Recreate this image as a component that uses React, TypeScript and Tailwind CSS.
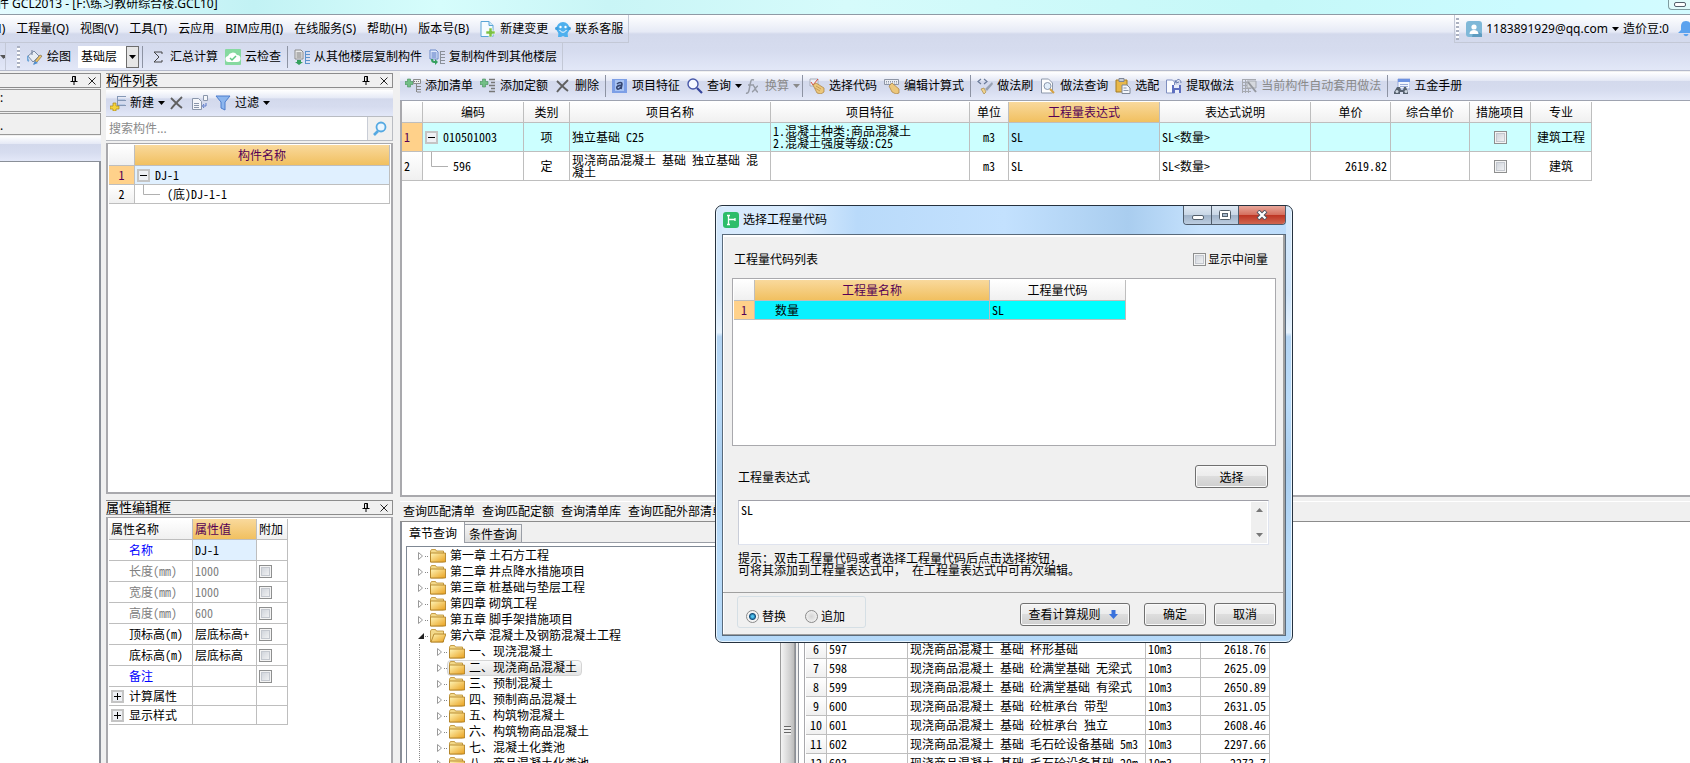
import React, { useState } from 'react'
import clsx from 'clsx'

const UI = "font-['Noto_Sans','Noto_Sans_CJK_SC',sans-serif]"
const GRID = "font-['Noto_Sans_Mono_CJK_SC','Noto_Sans_CJK_SC',monospace]"
const BAR = 'bg-[linear-gradient(#ffffff_0%,#e6eaf6_30%,#d3d9ec_34%,#d6dcef_65%,#e3e8f8_100%)]'
const HEAD = 'bg-[linear-gradient(#ffffff,#f0f0f0)]'
const HOT = 'bg-[linear-gradient(#f9d99c,#f1c060)] text-[#550055]'
const CELL = 'overflow-hidden border-r border-b border-[#bebebe] whitespace-nowrap p-0 font-normal'

const icons: Record<string, React.ReactNode> = {
  paint: (
    <>
      <path d="M1 7l6-5 5 5-6 6z" fill="#e7edf5" stroke="#7b8ba5" />
      <path d="M5 1v5" stroke="#6d7d96" />
      <path d="M1 7c-1 2-1 4 1 5" stroke="#6fa6d8" fill="none" strokeWidth="2" />
      <path d="M15 7l-5 6-3 2 1-3 5-6z" fill="#f2c560" stroke="#8a7b5c" strokeWidth=".8" />
      <path d="M8 12l3 2-5 2z" fill="#4d8fd6" />
    </>
  ),
  cloud: (
    <>
      <rect width="16" height="16" rx="1" fill="#86d9a0" />
      <path d="M4 13a3 3 0 0 1-1-6 5 5 0 0 1 9-1 3.500 3.500 0 0 1 0 7z" fill="#fff" />
      <path d="M5 9l2 2 4-4" stroke="#5fc882" strokeWidth="1.500" fill="none" />
    </>
  ),
  copyFrom: (
    <>
      <path d="M1 1h6l2 2v7H1z" fill="#ececec" stroke="#8b8b8b" />
      <path d="M2.500 4h5M2.500 6h5M2.500 8h5" stroke="#777" />
      <path d="M3 11h4v2h2l-4 3-4-3h2z" fill="#35a05e" />
      <path d="M11.500 2v13M12 2.500h4M12 5.500h4M12 8.500h4M12 11.500h4M12 14.500h4" stroke="#5d93cc" />
    </>
  ),
  copyTo: (
    <>
      <path d="M1 1h6l2 2v7H1z" fill="#dfe8fa" stroke="#6c8bcb" />
      <path d="M2.500 4h5M2.500 6h5M2.500 8h5" stroke="#4a6fc0" />
      <path d="M2 10h2c0 2 1 2 2 2v-2l3 3-3 3v-2c-3 0-4-1-4-4z" fill="#35a05e" />
      <path d="M11.500 2v13M12 2.500h4M12 5.500h4M12 8.500h4M12 11.500h4M12 14.500h4" stroke="#8a9099" />
    </>
  ),
  change: (
    <>
      <path d="M1 .5h8l4 4v11H1z" fill="#f5fbff" stroke="#5aa5d6" />
      <path d="M9 .5v4h4" fill="#cfe8f8" stroke="#5aa5d6" />
      <path d="M9 7h3v3h3v3h-3v3H9v-3H6v-3h3z" fill="#7cc142" stroke="#f4fbef" strokeWidth=".6" />
    </>
  ),
  service: (
    <>
      <circle cx="8" cy="7.500" r="6.500" fill="#4fb0ee" />
      <circle cx="1.800" cy="7.500" r="1.800" fill="#3f9fe0" />
      <circle cx="14.200" cy="7.500" r="1.800" fill="#3f9fe0" />
      <path d="M3.500 11L3 16h3l2-1 2 1h3l-.5-5z" fill="#4fb0ee" />
      <circle cx="5.500" cy="6" r="1.200" fill="#fff" />
      <circle cx="10.500" cy="6" r="1.200" fill="#fff" />
      <path d="M4.500 9c2 3 5 3 7 0" stroke="#fff" fill="none" />
    </>
  ),
  user: (
    <>
      <rect width="16" height="16" rx="3" fill="#7fb8d8" />
      <path d="M8 8l8 5v3H6z" fill="#5f9cc0" />
      <circle cx="8" cy="6" r="2.600" fill="#fff" />
      <path d="M3.500 13c0-3 2-4 4.500-4s4.500 1 4.500 4z" fill="#fff" />
    </>
  ),
  bell: <path d="M8 0c4 0 5 3 5 6v3l3 3H0l3-3V6c0-3 1-6 5-6zM5.500 13h5c-1 3-4 3-5 0z" fill="#5ba2ee" />,
  create: (
    <>
      <path d="M7.500 1v11M8 1.500h8M8 5.500h8M8 10.500h8" stroke="#8497b5" fill="none" />
      <path d="M8 4h7v1H8zM8 9h7v1H8z" fill="#b8c9e4" />
      <path d="M3 8h3v3h3v3H6v2H3v-2H0v-3h3z" fill="#f5d33d" stroke="#a98719" strokeWidth=".7" />
    </>
  ),
  cross: <path d="M2 3c3 3 7 7 11 10M13 2C9 6 5 10 2 14" stroke="#606060" strokeWidth="1.800" fill="none" />,
  dup: (
    <>
      <path d="M.5 3.500h6l3 3v8h-9z" fill="#f4f6fa" stroke="#8a96ab" />
      <path d="M2 8.500h5M2 10.500h5M2 12.500h5" stroke="#8a96ab" />
      <path d="M11.500.5h4v5h-4z" fill="#f4f6fa" stroke="#8a96ab" />
      <path d="M14 8v3h-3M12 9l-1.500 2 1.500 2" stroke="#5a78c8" fill="none" />
    </>
  ),
  funnel: <path d="M1 1h14l-5 6v8l-4-2V7z" fill="#8db6ee" stroke="#4c7dcc" />,
  addList: (
    <>
      <path d="M2.500 1h3v2.500H8v3H5.500V9h-3V6.500H0v-3h2.500z" fill="#72bf86" stroke="#468f5b" strokeWidth=".6" />
      <path d="M8.500 1.500h7v4h-7z" fill="#eee" stroke="#8c8c8c" />
      <path d="M9 3.500h6" stroke="#777" strokeDasharray="1 1" />
      <path d="M11.500 6v8M12 8.500h4M12 11.500h4M12 14h4" stroke="#888" />
    </>
  ),
  addQuota: (
    <>
      <path d="M2.500 1h3v2.500H8v3H5.500V9h-3V6.500H0v-3h2.500z" fill="#72bf86" stroke="#468f5b" strokeWidth=".6" />
      <path d="M9 1.500h6M11 4.500h4M9 7.500h6M11 10.500h4M9 13.500h6" stroke="#777" strokeWidth="1.300" />
    </>
  ),
  feature: (
    <>
      <rect y="1" width="15" height="14" fill="#7d9fe6" />
      <rect x="3" y="2" width="9" height="11" fill="#a9c4f3" />
      <path d="M5 6c2-2 5-2 5 0l-1 5M9.500 7.500C6 7 4 9 5 10.500s3 0 4-1.500" stroke="#34446e" strokeWidth="1.600" fill="none" />
    </>
  ),
  search: (
    <>
      <circle cx="6" cy="6" r="5" fill="#f5f8ff" stroke="#4757a8" strokeWidth="1.400" />
      <path d="M10 10l5 5" stroke="#35459c" strokeWidth="2.200" />
    </>
  ),
  find: (
    <>
      <circle cx="9" cy="6" r="4.500" fill="#eaf6ff" stroke="#55a9e2" strokeWidth="1.800" />
      <path d="M6 10l-4 4" stroke="#55a9e2" strokeWidth="2.600" />
    </>
  ),
  fx: (
    <path d="M1 15c3 1 3-3 4-8s1-6 4-5M3 7h6M8 8c2-1 2 6 5 6M13 8c-2 0-3 5-6 6" stroke="#979ca6" strokeWidth="1.500" fill="none" />
  ),
  pick: (
    <>
      <path d="M1 1h8v7H1z" fill="#eceff5" stroke="#a9afbb" />
      <path d="M2 4l2 3 5-6" stroke="#d9483a" fill="none" />
      <path d="M4 7l3-2 8 5v4l-3 2-4-1z" fill="#ecc77c" stroke="#a9803d" strokeWidth=".7" />
      <path d="M7 8l5 3M6 10l5 3" stroke="#b88d49" strokeWidth=".7" />
    </>
  ),
  edit: (
    <>
      <path d="M.5 1.500h14v5H.5z" fill="#eceff5" stroke="#8d95a5" />
      <path d="M2 3.500h11M2 5h11" stroke="#8d95a5" strokeDasharray="1 1" />
      <path d="M5 8l3-3 7 6v4l-3 1-4-2z" fill="#ecc77c" stroke="#a9803d" strokeWidth=".7" />
    </>
  ),
  brush: (
    <>
      <path d="M4 1L1 3.500 4 6M7 1l3 2.500L7 6" stroke="#6a7a98" fill="none" strokeWidth="1.200" />
      <path d="M4 11l3-1 2 4-2 2z" fill="#f0d38f" stroke="#a88a47" strokeWidth=".7" />
      <path d="M8 11l7-7 1 2-6 7z" fill="#98a2b4" />
    </>
  ),
  lookup: (
    <>
      <path d="M1.500 1h7l4 4v10h-11z" fill="#fdfdfd" stroke="#8d98ab" />
      <circle cx="7.500" cy="8" r="3.500" fill="#e1edf9" stroke="#8b97ab" />
      <path d="M10 11l4 4" stroke="#d5a142" strokeWidth="2" />
    </>
  ),
  paste: (
    <>
      <path d="M1 2h11v12H1z" fill="#e8b84a" stroke="#a37d25" />
      <path d="M4 .5h5v3H4z" fill="#c9ced8" stroke="#7e8797" />
      <path d="M7 7h5l3 3v5.500H7z" fill="#f3f6fb" stroke="#7e8797" />
      <path d="M8.500 10h3M8.500 12.500h5" stroke="#8c97aa" />
    </>
  ),
  extract: (
    <>
      <path d="M.5 2h6l2 2v11h-8z" fill="#fbfcff" stroke="#7f8fc0" />
      <path d="M6 7h9v8H6z" fill="#5e6fc0" />
      <path d="M8 7h5v3H8zM9 12h4v3H9z" fill="#e9edfa" />
      <path d="M10 4c1-4 5-3 5 1M9 2l1 3 3-1" stroke="#6a7cae" fill="none" />
    </>
  ),
  auto: (
    <>
      <path d="M1 1.500h14M1 4.500h5M1 7.500h5M1 10.500h9M1 13.500h9M1.500 1v14M4.500 1v14M7.500 4v11" stroke="#a6a9b0" />
      <path d="M6 3h9v7H6z" fill="#d5d8de" stroke="#a6a9b0" />
      <path d="M7 4l8 10" stroke="#94979e" strokeWidth="2" />
    </>
  ),
  manual: (
    <>
      <path d="M4 1h12v10H4z" fill="#f2f6ff" stroke="#9aabd8" />
      <path d="M4 1h12v3H4z" fill="#6d92e2" />
      <path d="M6 6.500h8M6 8.500h8" stroke="#9aabd8" />
      <path d="M3 9h3l1 3h2l1-3h2l2 5v2H9v-2H6v2H0v-2z" fill="#56616f" />
      <circle cx="3" cy="13.500" r="1.500" fill="#cfd8e2" />
      <circle cx="12" cy="13.500" r="1.500" fill="#cfd8e2" />
    </>
  ),
  sigma: <path d="M12 5V3H4l5 5-5 5h8v-2" stroke="#444" fill="none" />,
}

function Icon({ name }: { name: string }) {
  return (
    <svg viewBox="0 0 16 16" className="h-4 w-4 shrink-0" fill="none" aria-hidden="true">
      {icons[name]}
    </svg>
  )
}

const Arrow = () => (
  <svg viewBox="0 0 7 4" className="h-1 w-[7px] shrink-0" aria-hidden="true">
    <path d="M0 0h7L3.500 4z" fill="currentColor" />
  </svg>
)

interface toolInterface {
  icon?: string
  label: string
  arrow?: boolean
  disabled?: boolean
}

function Tool({ icon, label, arrow, disabled }: toolInterface) {
  return (
    <button
      type="button"
      disabled={disabled}
      className={clsx('flex shrink-0 items-center gap-1 whitespace-nowrap', disabled && 'text-[#8a8a8a]', arrow && '-mr-1')}
    >
      {icon && <Icon name={icon} />}
      {label}
      {arrow && <Arrow />}
    </button>
  )
}

const Sep = () => <span className="-mx-px h-[22px] w-px shrink-0 bg-[#8d93a3]" />

const Grip = () => <span className="h-[22px] w-[3px] shrink-0 bg-[repeating-linear-gradient(#aab0c0_0_2px,#ffffff_2px_4px)]" />

function PanelTitle({ title }: { title?: string }) {
  return (
    <div className="flex h-[15px] shrink-0 items-center border border-l-0 border-[#8c8c8c] bg-[#f0f0f0] pr-1 text-[13px] leading-[13px]">
      <h2 className="flex-1">{title}</h2>
      <button type="button" aria-label="固定" className="mr-[10px]">
        <svg viewBox="0 0 8 9" className="h-[9px] w-2" fill="none">
          <path d="M2.500 5V.5h3V5M5 0v5M.5 5.500h7M4 6v3" stroke="#000" />
        </svg>
      </button>
      <button type="button" aria-label="关闭">
        <svg viewBox="0 0 8 8" className="h-2 w-2" fill="none">
          <path d="M.5.5l7 7M7.500.5l-7 7" stroke="#222" />
        </svg>
      </button>
    </div>
  )
}

function Check({ label }: { label: string }) {
  return (
    <input
      type="checkbox"
      aria-label={label}
      className="block h-[13px] w-[13px] shrink-0 appearance-none border border-[#8e8f8f] bg-[linear-gradient(135deg,#c9ced6,#f8f8f8)] shadow-[inset_0_0_0_1px_#f4f4f4,inset_0_0_0_2px_#c4c8cf] checked:bg-[#3c7fb1]"
    />
  )
}

function Expander({ open }: { open?: boolean }) {
  return (
    <button type="button" aria-label={open ? '折叠' : '展开'} className="h-[13px] w-[13px] shrink-0 border-2 border-[#c4c4c4] bg-[#eef0f4]">
      <svg viewBox="0 0 9 9" className="h-[9px] w-[9px]" fill="none">
        <path d={open ? 'M1 4.500h7' : 'M1 4.500h7M4.500 1v7'} stroke="#000" />
      </svg>
    </button>
  )
}

const Branch = () => (
  <svg viewBox="0 0 17 28" className="h-7 w-[17px] shrink-0 self-start" fill="none" aria-hidden="true">
    <path d="M.5 0v14.500H17" stroke="#b0b0b0" />
  </svg>
)

const menus = ['工程量(Q)', '视图(V)', '工具(T)', '云应用', 'BIM应用(I)', '在线服务(S)', '帮助(H)', '版本号(B)']

function TopBars() {
  return (
    <header className="shrink-0">
      <div className="flex h-[15px] items-end justify-between border-b border-[#8f9aa5] bg-[linear-gradient(90deg,#e4fbff_0%,#c2f2f4_15%,#d6fdfc_26%,#c9f5f6_36%,#d6fbfb_50%,#c5f8f8_75%,#cbfbff_90%,#d3fbff_100%)]">
        <h1 className="-ml-[3px] whitespace-nowrap text-xs leading-5">件 GCL2013 - [F:\练习教研综合楼.GCL10]</h1>
        <button type="button" aria-label="最小化" className="mb-1 flex h-[10px] w-[22px] items-center justify-center rounded-bl border border-t-0 border-r-0 border-[#7f9b9f] bg-[#dffbfb]">
          <span className="h-[5px] w-3 rounded-xs border border-[#54606c] bg-white" />
        </button>
      </div>
      <div className={BAR}>
        <div className="flex h-7 items-center justify-between">
          <nav className="flex h-full items-center gap-[11px] border-r border-b border-[#c3c8d6] pr-[5px]">
            <a href="#" className="-ml-[11px]">(N)</a>
            {menus.map((m) => (
              <a key={m} href="#" className="whitespace-nowrap">{m}</a>
            ))}
            <span className="flex gap-[7px]">
              <Tool icon="change" label="新建变更" />
              <Tool icon="service" label="联系客服" />
            </span>
          </nav>
          <div className="flex h-full items-center gap-[7px] overflow-hidden border-b border-l border-[#c3c8d6] pl-px">
            <Grip />
            <Tool icon="user" label="1183891929@qq.com" arrow />
            <span className="pl-px">造价豆:0</span>
            <span className="-mr-1 pl-[2px]"><Icon name="bell" /></span>
          </div>
        </div>
        <div className="flex h-7 items-center border-b border-[#b5bacb]">
          <div className="flex h-full items-center gap-[7px] border-r border-[#c3c8d6] pr-[5px]">
            <span className="mr-1 flex h-full w-[6px] items-center overflow-hidden border-r border-[#c3c8d6] text-[#555]">
              <Arrow />
            </span>
            <Grip />
            <Tool icon="paint" label="绘图" />
            <span className="relative flex h-[22px] w-[61px] items-center bg-white">
              <select aria-label="楼层" className="h-full w-full appearance-none pl-[3px]">
                <option>基础层</option>
              </select>
              <span className="pointer-events-none absolute inset-y-0 right-0 flex w-[13px] items-center justify-center border border-[#6d6d6d] bg-[#e6e6e6]">
                <Arrow />
              </span>
            </span>
            <span className="-ml-1 h-[22px] w-px bg-[#8d93a3]" />
            <Tool icon="sigma" label="汇总计算" />
            <Tool icon="cloud" label="云检查" />
            <Sep />
            <Tool icon="copyFrom" label="从其他楼层复制构件" />
            <Tool icon="copyTo" label="复制构件到其他楼层" />
          </div>
        </div>
      </div>
    </header>
  )
}

function SidePanel() {
  return (
    <aside className="flex w-[101px] shrink-0 flex-col">
      <PanelTitle />
      <div className="mt-px h-[23px] border border-l-0 border-[#999]">:</div>
      <div className="mt-px h-[22px] border border-l-0 border-[#999] leading-6">.</div>
      <div className={clsx('mt-px h-[26px] border-b border-[#8a8f98]', BAR)} />
      <div className="flex-1 border-r-2 border-[#8a8f98] bg-white" />
    </aside>
  )
}

function ComponentPanel() {
  return (
    <section className="flex h-[421px] shrink-0 flex-col">
      <PanelTitle title="构件列表" />
      <div className={clsx('mt-[2px] flex h-[26px] shrink-0 items-center gap-[7px] pl-1', BAR)}>
        <Tool icon="create" label="新建" arrow />
        <button type="button" aria-label="删除" className="ml-px"><Icon name="cross" /></button>
        <button type="button" aria-label="复制"><Icon name="dup" /></button>
        <Tool icon="funnel" label="过滤" arrow />
      </div>
      <div className="flex h-[25px] shrink-0 border border-l-0 border-[#b9bcc2]">
        <input type="text" aria-label="搜索构件" placeholder="搜索构件..." className="min-w-0 flex-1 border-r border-[#c9cdd6] bg-white pl-[3px] placeholder:text-[#8a8a8a]" />
        <button type="button" aria-label="搜索" className="flex w-6 items-center justify-center"><Icon name="find" /></button>
      </div>
      <div className={clsx('mt-[2px] flex-1 border-2 border-t border-[#a9a9ad] bg-white px-px pt-px', GRID)}>
        <table className="w-full table-fixed border-separate border-spacing-0">
          <colgroup>
            <col className="w-[26px]" />
            <col />
          </colgroup>
          <thead>
            <tr className="h-[21px]">
              <th className={clsx(CELL, HEAD)} />
              <th className={clsx(CELL, HOT)}>构件名称</th>
            </tr>
          </thead>
          <tbody>
            <tr className="h-[19px]">
              <td className={clsx(CELL, 'bg-[#ffd18a] text-center text-[#550055]')}>1</td>
              <td className={clsx(CELL, 'bg-[#e0f0ff]')}>
                <div className="flex h-[18px] items-center gap-[5px] pl-[2px]"><Expander open />DJ-1</div>
              </td>
            </tr>
            <tr className="h-[19px]">
              <td className={clsx(CELL, HEAD, 'text-center')}>2</td>
              <td className={CELL}>
                <div className="flex h-[18px] items-center gap-[7px] pl-2">
                  <svg viewBox="0 0 17 18" className="h-[18px] w-[17px]" fill="none" aria-hidden="true">
                    <path d="M.5 0v9.500H17" stroke="#b0b0b0" />
                  </svg>
                  (底)DJ-1-1
                </div>
              </td>
            </tr>
          </tbody>
        </table>
      </div>
    </section>
  )
}

const props = [
  { name: '名称', value: 'DJ-1', tone: 'text-[#0000ff]', check: false },
  { name: '长度(mm)', value: '1000', tone: 'text-[#808080]', check: true },
  { name: '宽度(mm)', value: '1000', tone: 'text-[#808080]', check: true },
  { name: '高度(mm)', value: '600', tone: 'text-[#808080]', check: true },
  { name: '顶标高(m)', value: '层底标高+', tone: '', check: true },
  { name: '底标高(m)', value: '层底标高', tone: '', check: true },
  { name: '备注', value: '', tone: 'text-[#0000ff]', check: true },
]

function PropertyPanel() {
  return (
    <section className="mt-[6px] flex min-h-0 flex-1 flex-col">
      <PanelTitle title="属性编辑框" />
      <div className={clsx('mt-[2px] flex-1 border-2 border-t border-b-0 border-[#a9a9ad] bg-white pt-px pl-px', GRID)}>
        <table className="w-[179px] table-fixed border-separate border-spacing-0">
          <colgroup>
            <col className="w-[84px]" />
            <col className="w-16" />
            <col className="w-[31px]" />
          </colgroup>
          <thead>
            <tr className="h-[21px] text-left">
              <th className={clsx(CELL, HEAD, 'pl-[2px]')}>属性名称</th>
              <th className={clsx(CELL, HOT, 'pl-[2px]')}>属性值</th>
              <th className={clsx(CELL, HEAD, 'pl-[2px]')}>附加</th>
            </tr>
          </thead>
          <tbody>
            {props.map((p, i) => (
              <tr key={p.name} className="h-[21px]">
                <td className={clsx(CELL, 'pl-5', p.tone)}>{p.name}</td>
                <td className={clsx(CELL, 'pl-[2px]', i === 0 ? 'bg-[#e0f0ff]' : p.tone)}>{p.value}</td>
                <td className={clsx(CELL, 'pl-[2px]')}>{p.check && <Check label={p.name} />}</td>
              </tr>
            ))}
            {['计算属性', '显示样式'].map((n) => (
              <tr key={n} className="h-[19px]">
                <td className={CELL}>
                  <div className="flex h-[18px] items-center gap-[5px] pl-[2px]"><Expander />{n}</div>
                </td>
                <td className={CELL} />
                <td className={CELL} />
              </tr>
            ))}
          </tbody>
        </table>
      </div>
    </section>
  )
}

function MainToolbar() {
  return (
    <div className={clsx('flex h-[29px] shrink-0 items-center gap-[7px] overflow-hidden border-b border-[#9ea3b0] pl-[5px]', BAR)}>
      <Tool icon="addList" label="添加清单" />
      <Tool icon="addQuota" label="添加定额" />
      <Tool icon="cross" label="删除" />
      <Sep />
      <Tool icon="feature" label="项目特征" />
      <Tool icon="search" label="查询" arrow />
      <Tool icon="fx" label="换算" arrow disabled />
      <Sep />
      <Tool icon="pick" label="选择代码" />
      <Tool icon="edit" label="编辑计算式" />
      <Sep />
      <Tool icon="brush" label="做法刷" />
      <Tool icon="lookup" label="做法查询" />
      <Tool icon="paste" label="选配" />
      <Tool icon="extract" label="提取做法" />
      <Tool icon="auto" label="当前构件自动套用做法" disabled />
      <Sep />
      <Tool icon="manual" label="五金手册" />
    </div>
  )
}

function ItemTable() {
  const heads = ['编码', '类别', '项目名称', '项目特征', '单位', '工程量表达式', '表达式说明', '单价', '综合单价', '措施项目', '专业']
  return (
    <div className={clsx('h-[396px] shrink-0 overflow-hidden border-b-2 border-l-2 border-[#a9a9ad] bg-white pt-px', GRID)}>
      <table className="w-[1190px] table-fixed border-separate border-spacing-0">
        <colgroup>
          <col className="w-[21px]" />
          <col className="w-[101px]" />
          <col className="w-[46px]" />
          <col className="w-[201px]" />
          <col className="w-[199px]" />
          <col className="w-[39px]" />
          <col className="w-[151px]" />
          <col className="w-[151px]" />
          <col className="w-20" />
          <col className="w-[79px]" />
          <col className="w-[61px]" />
          <col className="w-[61px]" />
        </colgroup>
        <thead>
          <tr className="h-[21px]">
            <th className={clsx(CELL, HEAD)} />
            {heads.map((h) => (
              <th key={h} className={clsx(CELL, h === '工程量表达式' ? HOT : HEAD)}>{h}</th>
            ))}
          </tr>
        </thead>
        <tbody className="leading-3">
          <tr className="h-[29px] bg-[#ccffff]">
            <td className={clsx(CELL, 'bg-[#ffd18a] pl-[2px] text-[#550055]')}>1</td>
            <td className={CELL}>
              <div className="flex items-center gap-[5px] pl-[2px]"><Expander open />010501003</div>
            </td>
            <td className={clsx(CELL, 'text-center')}>项</td>
            <td className={clsx(CELL, 'pl-[2px]')}>独立基础 C25</td>
            <td className={clsx(CELL, 'pl-[2px]')}>1.混凝土种类:商品混凝土<br />2.混凝土强度等级:C25</td>
            <td className={clsx(CELL, 'text-center')}>m3</td>
            <td className={clsx(CELL, 'bg-[#b3eeff] pl-[2px]')}>SL</td>
            <td className={clsx(CELL, 'pl-[2px]')}>SL&lt;数量&gt;</td>
            <td className={CELL} />
            <td className={CELL} />
            <td className={CELL}><div className="flex justify-center"><Check label="措施项目 1" /></div></td>
            <td className={clsx(CELL, 'text-center')}>建筑工程</td>
          </tr>
          <tr className="h-[29px]">
            <td className={clsx(CELL, HEAD, 'pl-[2px]')}>2</td>
            <td className={CELL}>
              <div className="flex h-7 items-center gap-[5px] pl-2"><Branch />596</div>
            </td>
            <td className={clsx(CELL, 'text-center')}>定</td>
            <td className={clsx(CELL, 'pl-[2px]')}>现浇商品混凝土 基础 独立基础 混<br />凝土</td>
            <td className={CELL} />
            <td className={clsx(CELL, 'text-center')}>m3</td>
            <td className={clsx(CELL, 'pl-[2px]')}>SL</td>
            <td className={clsx(CELL, 'pl-[2px]')}>SL&lt;数量&gt;</td>
            <td className={clsx(CELL, 'pr-[3px] text-right')}>2619.82</td>
            <td className={CELL} />
            <td className={CELL}><div className="flex justify-center"><Check label="措施项目 2" /></div></td>
            <td className={clsx(CELL, 'text-center')}>建筑</td>
          </tr>
        </tbody>
      </table>
    </div>
  )
}

const chapters = ['第一章 土石方工程', '第二章 井点降水措施项目', '第三章 桩基础与垫层工程', '第四章 砌筑工程', '第五章 脚手架措施项目', '第六章 混凝土及钢筋混凝土工程']
const sections = ['一、现浇混凝土', '二、现浇商品混凝土', '三、预制混凝土', '四、预制商品混凝土', '五、构筑物混凝土', '六、构筑物商品混凝土', '七、混凝土化粪池', '八、商品混凝土化粪池']

function TreeNode({ label, open, active }: { label: string; open?: boolean; active?: boolean }) {
  return (
    <li className="flex h-4 items-center">
      <svg viewBox="0 0 8 10" className="h-[10px] w-2 shrink-0" fill="none" aria-hidden="true">
        {open ? <path d="M7 2v6H1z" fill="#222" /> : <path d="M1.500 1.500v7l4-3.500z" fill="#fff" stroke="#9a9a9a" />}
      </svg>
      <span className="w-[3px] border-t border-dotted border-[#888]" />
      <span
        className={clsx(
          'flex h-4 items-center gap-1 whitespace-nowrap border px-px pr-1',
          active ? 'rounded-sm border-[#d4d4d4] bg-[linear-gradient(#fafafa,#e4e4e4)]' : 'border-transparent'
        )}
      >
        <svg viewBox="0 0 16 14" className="h-[14px] w-4 shrink-0" fill="none" aria-hidden="true">
          <defs>
            <linearGradient id="folder" x1="0" y1="0" x2="1" y2="1">
              <stop offset="0" stopColor="#fff6b8" />
              <stop offset="1" stopColor="#e9a01e" />
            </linearGradient>
          </defs>
          <path d="M.5 13V2l1-1.500h4l1 1.500h7v11z" fill="#f3d98a" stroke="#b98a2c" strokeWidth=".8" />
          <path d={open ? 'M1 13l3-8h12l-3 8z' : 'M.5 4h15v9H.5z'} fill="url(#folder)" stroke="#a9781c" strokeWidth=".8" />
        </svg>
        {label}
      </span>
    </li>
  )
}

const quotas = [
  ['6', '597', '现浇商品混凝土 基础 杯形基础', '2618.76'],
  ['7', '598', '现浇商品混凝土 基础 砼满堂基础 无梁式', '2625.09'],
  ['8', '599', '现浇商品混凝土 基础 砼满堂基础 有梁式', '2650.89'],
  ['9', '600', '现浇商品混凝土 基础 砼桩承台 带型', '2631.05'],
  ['10', '601', '现浇商品混凝土 基础 砼桩承台 独立', '2608.46'],
  ['11', '602', '现浇商品混凝土 基础 毛石砼设备基础 5m3', '2297.66'],
  ['12', '603', '现浇商品混凝土 基础 毛石砼设备基础 20m', '2273.7'],
]

function QueryArea() {
  return (
    <section className={clsx('mt-1 flex min-h-0 flex-1 flex-col', GRID)}>
      <div className="flex h-[21px] shrink-0 items-center gap-[7px] border-t border-b border-t-white border-b-[#8c8c8c] pb-[2px] pl-[3px]">
        {['查询匹配清单', '查询匹配定额', '查询清单库', '查询匹配外部清单'].map((t) => (
          <button key={t} type="button" className="whitespace-nowrap">{t}</button>
        ))}
      </div>
      <div className="flex min-h-0 flex-1">
        <div className="flex w-[396px] shrink-0 flex-col border-r border-l-2 border-[#8a8f98]">
          <div className="flex h-[21px] shrink-0 items-end">
            <button type="button" className="h-[21px] w-[63px] border-r border-[#9a9ea6] bg-white">章节查询</button>
            <button type="button" className="h-[19px] w-[57px] border border-l-0 border-[#9a9ea6] bg-[linear-gradient(#f6f6f6,#dcdcdc)]">条件查询</button>
            <span className="h-px flex-1 bg-[#9a9ea6]" />
          </div>
          <div className="flex min-h-0 flex-1 bg-white pt-[3px] pl-1">
            <div className="flex flex-1 overflow-hidden border-t border-l border-[#7f8894]">
              <ul className={clsx('flex-1 pt-px pl-[10px]', UI)}>
                {chapters.map((c, i) => (
                  <TreeNode key={c} label={c} open={i === chapters.length - 1} />
                ))}
                <li>
                  <ul className="ml-[2px] border-l border-dotted border-[#888] pl-4">
                    {sections.map((s, i) => (
                      <TreeNode key={s} label={s} active={i === 1} />
                    ))}
                  </ul>
                </li>
              </ul>
              <div className="flex w-[15px] flex-col items-center border-x border-[#9b9b9b] bg-[linear-gradient(90deg,#f4f4f4,#d0d0d0_70%,#bcbcbc)]">
                <span className="mt-[179px] h-[9px] w-[7px] bg-[repeating-linear-gradient(#666_0_1px,#eee_1px_3px)]" />
              </div>
            </div>
          </div>
        </div>
        <div className="ml-[2px] min-w-0 flex-1 overflow-hidden border-l border-[#8a8f98] bg-white pl-[5px]">
          <div className="h-full border-l border-[#a9a9ad] pt-1 pl-px">
            <table className="w-[464px] table-fixed border-separate border-spacing-0">
              <colgroup>
                <col className="w-[21px]" />
                <col className="w-[81px]" />
                <col className="w-[238px]" />
                <col className="w-[55px]" />
                <col className="w-[69px]" />
              </colgroup>
              <tbody>
                {[1, 2, 3, 4, 5, 6].map((n) => (
                  <tr key={n} className="h-[19px]">
                    <td className={clsx(CELL, HEAD)} />
                    <td className={CELL} />
                    <td className={CELL} />
                    <td className={CELL} />
                    <td className={CELL} />
                  </tr>
                ))}
                {quotas.map(([no, code, name, price]) => (
                  <tr key={no} className="h-[19px]">
                    <td className={clsx(CELL, HEAD, 'text-center')}>{no}</td>
                    <td className={clsx(CELL, 'pl-[2px]')}>{code}</td>
                    <td className={clsx(CELL, 'pl-[2px]')}>{name}</td>
                    <td className={clsx(CELL, 'pl-[2px]')}>10m3</td>
                    <td className={clsx(CELL, 'pr-[3px] text-right')}>{price}</td>
                  </tr>
                ))}
              </tbody>
            </table>
          </div>
        </div>
      </div>
    </section>
  )
}

const BTN =
  'flex h-[23px] items-center justify-center gap-2 rounded-[3px] border border-[#707070] bg-[linear-gradient(#f4f4f4_0%,#ececec_48%,#dddddd_50%,#cfcfcf_100%)] shadow-[inset_0_0_0_1px_#fafafa]'

function CodeDialog() {
  const [mode, setMode] = useState('替换')

  return (
    <div
      role="dialog"
      aria-label="选择工程量代码"
      className={clsx(
        'absolute top-[205px] left-[715px] w-[578px] rounded-[7px] border border-[#26323f] px-[6px] pb-[6px] shadow-[inset_0_0_0_1px_#e8f5ff]',
        'bg-[linear-gradient(#d5e9fc_0%,#cde3f9_20%,#e6f2fd_29%,#b3d4f3_30%,#b9dbf9_45%,#a9cdee_60%,#b9dcfa_80%,#b4d8f8_100%)]'
      )}
    >
      <div className="flex h-7 rounded-t-md bg-[linear-gradient(90deg,#d7eafd_0%,#d9ebfd_14%,#b9dafa_24%,#c3e1fe_50%,#a9cdef_72%,#c6e2fd_85%,#bcdcfb_100%)] pl-px">
        <div className="flex flex-1 items-center gap-1">
          <svg viewBox="0 0 16 16" className="h-4 w-4" fill="none" aria-hidden="true">
            <rect width="16" height="16" rx="3" fill="#2dbd6a" />
            <path d="M4 3.500h3M4 12.500h3M5.500 3.500v9M6 7.500h6M12 6v3" stroke="#fff" strokeWidth="1.300" />
          </svg>
          <h2 className={UI}>选择工程量代码</h2>
        </div>
        <div className="flex h-[19px] overflow-hidden rounded-b-[4px] border border-t-0 border-[#4f5c6b]">
          <button type="button" aria-label="最小化" className="flex w-7 items-center justify-center border-r border-[#4f5c6b] bg-[linear-gradient(#dfe9f4_0%,#c9d7e6_48%,#9fb2c8_50%,#bccde0_100%)]">
            <span className="mt-1 h-[5px] w-3 rounded-xs border border-[#54606c] bg-white" />
          </button>
          <button type="button" aria-label="最大化" className="flex w-[27px] items-center justify-center border-r border-[#4f5c6b] bg-[linear-gradient(#dfe9f4_0%,#c9d7e6_48%,#9fb2c8_50%,#bccde0_100%)]">
            <svg viewBox="0 0 12 10" className="h-[10px] w-3" fill="none">
              <rect x=".5" y=".5" width="11" height="9" rx="1" fill="#fff" stroke="#54606c" />
              <rect x="3.500" y="3.500" width="5" height="3" fill="#a9bbce" stroke="#54606c" />
            </svg>
          </button>
          <button type="button" aria-label="关闭" className="flex w-[46px] items-center justify-center bg-[linear-gradient(#e8a79b_0%,#d5705f_48%,#bd3322_50%,#cf6650_100%)]">
            <svg viewBox="0 0 12 10" className="h-[10px] w-3" fill="none">
              <path d="M2 1l8 8M10 1L2 9" stroke="#4c5260" strokeWidth="4" />
              <path d="M2.500 1.500l7 7M9.500 1.500l-7 7" stroke="#fff" strokeWidth="2.200" />
            </svg>
          </button>
        </div>
      </div>

      <div className={clsx('border border-[#5a6b7c] bg-[#f0f0f0] shadow-[inset_-2px_-1px_0_#a0a0a0,inset_1px_2px_0_#ffffff]', GRID)}>
        <div className="px-[9px] pt-4 pb-4">
          <div className="flex h-4 items-center justify-between pr-2 pl-[2px]">
            <h3>工程量代码列表</h3>
            <label className="flex items-center gap-[2px]"><Check label="显示中间量" />显示中间量</label>
          </div>
          <div className="mt-[11px] h-[168px] border border-[#a9a9ad] bg-white pt-px pl-px">
            <table className="w-[392px] table-fixed border-separate border-spacing-0">
              <colgroup>
                <col className="w-[21px]" />
                <col className="w-[235px]" />
                <col className="w-[136px]" />
              </colgroup>
              <thead>
                <tr className="h-[21px]">
                  <th className={clsx(CELL, HEAD)} />
                  <th className={clsx(CELL, HOT)}>工程量名称</th>
                  <th className={clsx(CELL, HEAD)}>工程量代码</th>
                </tr>
              </thead>
              <tbody>
                <tr className="h-[19px]">
                  <td className={clsx(CELL, 'bg-[#ffd18a] text-center text-[#550055]')}>1</td>
                  <td className={clsx(CELL, 'bg-[#0af0ff] pl-5')}>数量</td>
                  <td className={clsx(CELL, 'bg-[#00ffff] pl-[2px]')}>SL</td>
                </tr>
              </tbody>
            </table>
          </div>
          <div className="mt-[19px] flex items-center justify-between pr-2 pl-[6px]">
            <label htmlFor="expr">工程量表达式</label>
            <button type="button" className={clsx(BTN, 'w-[73px]')}>选择</button>
          </div>
          <div className="mt-3 mr-[7px] ml-[6px] flex h-[45px] border border-t-[#a0a0a8] border-r-[#dfe3ee] border-b-[#dfe3ee] border-l-[#c9cdd8] bg-white">
            <textarea id="expr" defaultValue="SL" className="flex-1 resize-none pt-px pl-[2px] leading-4 outline-none" />
            <div className="m-px flex w-4 flex-col items-center justify-between bg-[#efefef] py-[6px] text-[#777]">
              <svg viewBox="0 0 7 4" className="h-1 w-[7px]"><path d="M0 4h7L3.500 0z" fill="currentColor" /></svg>
              <svg viewBox="0 0 7 4" className="h-1 w-[7px]"><path d="M0 0h7L3.500 4z" fill="currentColor" /></svg>
            </div>
          </div>
          <p className="mt-[7px] pl-[6px] leading-3">
            提示：双击工程量代码或者选择工程量代码后点击选择按钮，
            <br />
            可将其添加到工程量表达式中， 在工程量表达式中可再次编辑。
          </p>
        </div>
        <div className="flex h-[43px] items-center justify-between border-t border-[#a0a0a0] pr-[9px] pl-[14px]">
          <fieldset className="mb-1 flex h-8 items-center gap-[19px] rounded-[3px] border border-[#d5dfe5] pt-2 pr-5 pl-2">
            {['替换', '追加'].map((m) => (
              <label key={m} className="flex items-center gap-[3px]">
                <input
                  type="radio"
                  name="mode"
                  checked={mode === m}
                  onChange={() => setMode(m)}
                  className="h-[13px] w-[13px] appearance-none rounded-full border border-[#8a8a8a] bg-[radial-gradient(#d4d4d4,#fafafa)] checked:bg-[radial-gradient(circle,#4fc3f0_0_1px,#12507e_3px,#f4f4f4_4px)]"
                />
                {m}
              </label>
            ))}
          </fieldset>
          <div className="flex">
            <button type="button" className={clsx(BTN, 'w-[110px] pr-1')}>
              查看计算规则
              <svg viewBox="0 0 9 9" className="h-[9px] w-[9px]" aria-hidden="true">
                <path d="M2.500 0h4v4H9L4.500 9 0 4h2.500z" fill="#3a72dc" />
              </svg>
            </button>
            <button type="button" className={clsx(BTN, 'ml-[14px] w-[62px]')}>确定</button>
            <button type="button" className={clsx(BTN, 'ml-2 w-[62px]')}>取消</button>
          </div>
        </div>
      </div>
    </div>
  )
}

export default function App() {
  return (
    <div className={clsx('relative flex h-screen flex-col overflow-hidden bg-[#f0f0f0] text-xs text-black', UI)}>
      <TopBars />
      <main className="flex min-h-0 flex-1">
        <div className="flex pt-[2px]">
          <SidePanel />
          <div className="ml-[5px] flex w-[287px] shrink-0 flex-col">
            <ComponentPanel />
            <PropertyPanel />
          </div>
        </div>
        <div className="ml-[7px] flex min-w-0 flex-1 flex-col pt-px">
          <MainToolbar />
          <ItemTable />
          <QueryArea />
        </div>
      </main>
      <CodeDialog />
    </div>
  )
}
